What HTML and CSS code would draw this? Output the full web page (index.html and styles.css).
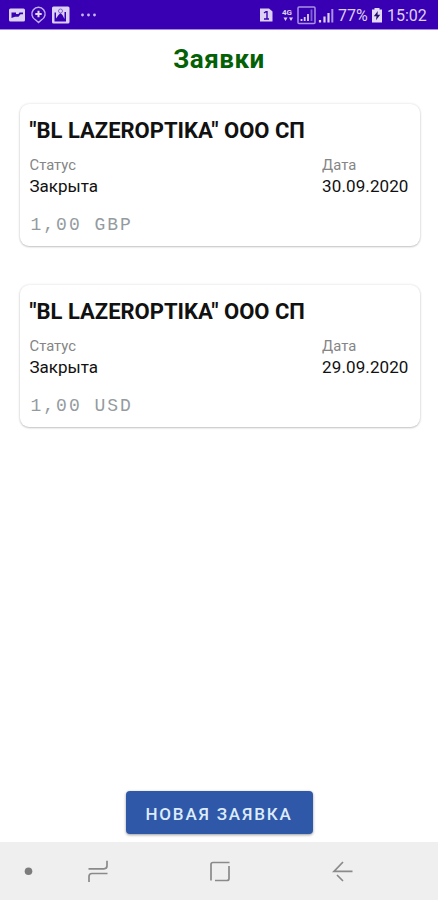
FILE: index.html
```
<!DOCTYPE html>
<html lang="ru">
<head>
  <meta charset="utf-8">
  <title>Заявки</title>
  <link rel="stylesheet" href="styles.css">
</head>
<body>

<div class="status-bar">
  <svg class="status-left" width="100" height="29" viewBox="0 0 100 29">
    <!-- gallery -->
    <rect x="9" y="8.5" width="16" height="13" rx="1.5" fill="#ddd0f5"/>
    <path d="M11.500 18V12.500h4.500v1.500h2.500l1-1.500H23v1.800h-2.500l-2 2.500h-3.500z" fill="#3900b3"/>
    <!-- pin -->
    <path d="M38.5 22.5l-3-2.700a6.600 6.600 0 1 1 6 0z" fill="none" stroke="#c3aff0" stroke-width="1.400"/>
    <path d="M38.5 10.800v6.400M35.300 14h6.400" stroke="#e4daf8" stroke-width="2"/>
    <!-- photo -->
    <rect x="52" y="6.500" width="17.500" height="17" rx="1.500" fill="#ddd0f5"/>
    <path d="M54.500 21.500v-9H56v6l2.500-3.500 2-2 2 2 2 4V12h1.500v9.500z" fill="#3900b3"/>
    <circle cx="60.500" cy="11" r="2" fill="none" stroke="#8060d0"/>
    <g fill="#c9b8f0">
      <circle cx="82.500" cy="15" r="1.400"/><circle cx="88.500" cy="15" r="1.400"/><circle cx="94.500" cy="15" r="1.400"/>
    </g>
  </svg>
  <div class="status-right">
    <svg width="77" height="29" viewBox="258 0 77 29">
      <!-- sim -->
      <path d="M259 8.500h9l3.500 3v10h-12.500z" fill="#ddd0f5"/>
      <path d="M263 13l2-1.300h1v7.300M263 19h5" fill="none" stroke="#3900b3" stroke-width="1.400"/>
      <text x="281" y="14.500" class="net">4G</text>
      <path d="M282.500 17.500h4l-2 3.500zM288 17.500h4l-2 3.500z" fill="#ddd0f5"/>
      <!-- signal 1 -->
      <rect x="297" y="7" width="17" height="16.500" rx="1" fill="none" stroke="#a991e5" stroke-width="1.500"/>
      <path d="M300.500 21v-2M303.700 21v-4M307 21v-7" stroke="#ddd0f5" stroke-width="1.800"/>
      <path d="M310.500 21V9.500" stroke="#8060d0" stroke-width="1.800"/>
      <!-- signal 2 -->
      <path d="M319 22.500v-2.500M323.500 22.500v-6M327.500 22.500V13" stroke="#ddd0f5" stroke-width="2.200"/>
      <path d="M331.300 22.500V9" stroke="#a991e5" stroke-width="2"/>
    </svg>
    <span class="percent">77%</span>
    <svg class="battery" width="10" height="29" viewBox="372 0 10 29">
      <path d="M374.500 8h5v1.500h2.500v13h-10v-13h2.500z" fill="#e4daf8"/>
      <path d="M377.800 11l-4 5.200h2.700l-.5 4 4.200-5.500h-2.700z" fill="#24106a"/>
    </svg>
    <span class="clock">15:02</span>
  </div>
</div>

<h1>Заявки</h1>

<div class="orders">
  <div class="card">
    <h2>"BL LAZEROPTIKA" ООО СП</h2>
    <div class="row">
      <div>
        <div class="label">Статус</div>
        <div class="value">Закрыта</div>
      </div>
      <div class="date">
        <div class="label">Дата</div>
        <div class="value">30.09.2020</div>
      </div>
    </div>
    <div class="amount">1,00 GBP</div>
  </div>

  <div class="card">
    <h2>"BL LAZEROPTIKA" ООО СП</h2>
    <div class="row">
      <div>
        <div class="label">Статус</div>
        <div class="value">Закрыта</div>
      </div>
      <div class="date">
        <div class="label">Дата</div>
        <div class="value">29.09.2020</div>
      </div>
    </div>
    <div class="amount">1,00 USD</div>
  </div>
</div>

<button class="new-btn">НОВАЯ ЗАЯВКА</button>

<div class="nav-bar">
  <svg width="438" height="58" viewBox="0 842 438 58">
    <circle cx="28.500" cy="871.300" r="3.800" fill="#7c7c7c"/>
    <g fill="none" stroke="#8a8a8a" stroke-width="1.700">
      <path d="M88.500 868.800H104q3 0 3-3v-5M107.500 873.500H92q-3 0-3 3v5.500"/>
      <path d="M211 880.500v-16q0-2 2-2h16.500M229 866v12.500q0 2-2 2H215"/>
      <path d="M352.500 871.300H334l9-9.300M337 875l6 6"/>
    </g>
  </svg>
</div>

</body>
</html>
```
FILE: styles.css
```
body {
  margin: 0;
  height: 900px;
  display: flex;
  flex-direction: column;
  background: #fff;
  color: #111;
  font-family: Roboto, sans-serif;
}

.status-bar {
  height: 29px;
  display: flex;
  justify-content: space-between;
  background: #3900b3;
  border-bottom: 1px solid #a58bdd;
  color: #ddd0f5;
}

svg {
  display: block;
}

.status-right {
  display: flex;
  padding-right: 10px;
  font-size: 16px;
  line-height: 31px;
}

.net {
  font-size: 8px;
  font-weight: bold;
  fill: #ddd0f5;
}

.percent {
  width: 31px;
  margin-left: 2px;
}

.battery {
  margin: 0 5px 0 3px;
}

.clock {
  width: 41px;
}

h1 {
  margin: 0;
  height: 74px;
  line-height: 59px;
  text-align: center;
  font-size: 26px;
  letter-spacing: 0.5px;
  color: #056105;
}

.orders {
  display: flex;
  flex-direction: column;
  gap: 39px;
  padding: 0 18.5px 0 19.5px;
}

.card {
  height: 142px;
  box-sizing: border-box;
  padding: 13px 11px 0 10px;
  border-radius: 9px;
  background: #fff;
  box-shadow: 0 1px 2px rgba(0, 0, 0, 0.2), 0 0 3px rgba(0, 0, 0, 0.12);
}

h2 {
  margin: 0;
  font-size: 22px;
  line-height: 28px;
  font-weight: bold;
  white-space: nowrap;
}

.row {
  display: flex;
  justify-content: space-between;
  margin-top: 9px;
}

.label {
  font-size: 14.8px;
  line-height: 22px;
  color: #858585;
}

.value {
  font-size: 17px;
  line-height: 21px;
}

.date .value {
  letter-spacing: 0.1px;
}

.amount {
  margin-top: 17px;
  padding-left: 1px;
  font-family: "Liberation Mono", monospace;
  font-size: 18px;
  line-height: 22px;
  letter-spacing: 2px;
  color: #949ba0;
}

.new-btn {
  align-self: center;
  width: 187px;
  height: 43px;
  margin-top: auto;
  margin-bottom: 8px;
  padding: 2px 0 0;
  border: none;
  border-radius: 4px;
  background: #3058a8;
  box-shadow: 0 1px 3px rgba(0, 0, 0, 0.4);
  color: #dcecfc;
  font-family: Roboto, sans-serif;
  font-size: 17px;
  font-weight: 500;
  letter-spacing: 1.8px;
}

.nav-bar {
  height: 58px;
  background: #efefef;
}
```
